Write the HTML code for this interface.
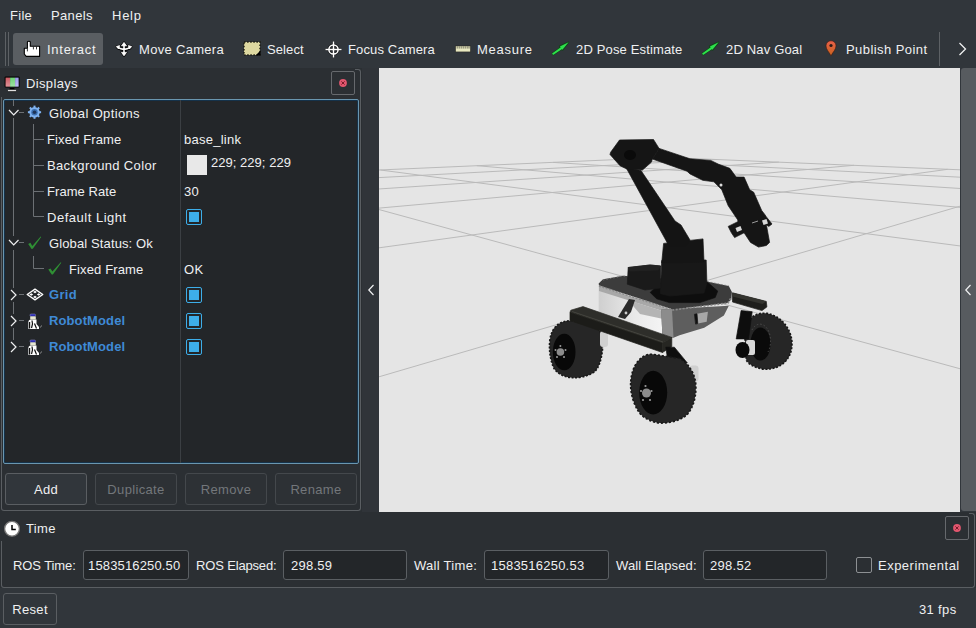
<!DOCTYPE html>
<html><head><meta charset="utf-8">
<style>
*{box-sizing:border-box;margin:0;padding:0}
html,body{width:976px;height:628px;overflow:hidden;background:#31363b;font-family:"Liberation Sans",sans-serif;font-size:13px;color:#eff0f1;letter-spacing:0.35px}
.a{position:absolute}
.t{position:absolute;white-space:nowrap;line-height:15px}
.lk{color:#3f8ad6;font-weight:bold}
.num{letter-spacing:0.1px}
.btn{border:1px solid #5a5e62;border-radius:3px;background:#31363b;text-align:center;line-height:31px}
.dis{color:#73777b;border-color:#44484c;background:#2d3135}
.inp{border:1px solid #5b5f63;border-radius:3px;background:#232629}
.cb{left:186px;width:16px;height:16px;border:1.5px solid #3daee9;border-radius:2px;background:#232629}
.cb::after{content:"";position:absolute;left:1.5px;top:1.5px;width:10px;height:10px;background:#3daee9}
</style></head><body>
<!-- menu -->
<span class="t" style="left:10px;top:8px;letter-spacing:0.28px">File</span>
<span class="t" style="left:51px;top:8px">Panels</span>
<span class="t" style="left:112px;top:8px;letter-spacing:0.75px">Help</span>
<!-- toolbar -->
<div class="a" style="left:5px;top:32px;width:1px;height:34px;background:#5d6165"></div>
<div class="a" style="left:8px;top:32px;width:1px;height:34px;background:#5d6165"></div>
<div class="a" style="left:13px;top:33px;width:90px;height:32px;background:#5a5e62;border-radius:3px"></div>
<svg class="a" style="left:22px;top:39px" width="20" height="20" viewBox="0 0 20 20">
 <path d="M4.2 17.4 L2.3 15 V9.2 H5.4 V3 Q5.4 2.2 6.85 2.2 Q8.3 2.2 8.3 3 V7.2 H17.6 V17.4 Z" fill="#fff" stroke="#000" stroke-width="1.1" stroke-linejoin="round"/>
 <path d="M5.4 9.2 V12.4 M11.4 7.4 V10.4 M14.5 7.4 V10.4" stroke="#222" stroke-width="0.9"/>
</svg>
<span class="t" style="left:47px;top:42px;letter-spacing:0.75px">Interact</span>
<svg class="a" style="left:114px;top:39px" width="20" height="20" viewBox="0 0 20 20">
 <g stroke="#000" stroke-width="3.4" fill="#000" stroke-linejoin="round" opacity="0.9">
  <path d="M10 4.5 V15.5 M3.5 8.2 Q10 12.6 16.5 8.2" fill="none"/>
  <path d="M10 3.4 L7.5 6.8 H12.5 Z M10 16.8 L7.5 13.4 H12.5 Z M2.3 7.6 L5.6 6.6 L4.6 10 Z M17.7 7.6 L14.4 6.6 L15.4 10 Z" stroke-width="2"/>
 </g>
 <path d="M10 4.5 V15.5 M3.5 8.2 Q10 12.6 16.5 8.2" stroke="#fff" stroke-width="1.6" fill="none"/>
 <path d="M10 3.4 L7.5 6.8 H12.5 Z M10 16.8 L7.5 13.4 H12.5 Z M2.3 7.6 L5.6 6.6 L4.6 10 Z M17.7 7.6 L14.4 6.6 L15.4 10 Z" fill="#fff" stroke="#fff" stroke-width="0.8" stroke-linejoin="round"/>
</svg>
<span class="t" style="left:139px;top:42px;letter-spacing:0.31px">Move Camera</span>
<svg class="a" style="left:243px;top:41px" width="18" height="15" viewBox="0 0 18 15">
 <rect x="1" y="1" width="16" height="13" fill="#ddd8a0"/>
 <rect x="1" y="1" width="16" height="13" fill="none" stroke="#1c1c10" stroke-width="1.4" stroke-dasharray="1.5 1.6"/>
 <path d="M17.5 9.5 V14.5 H12.5 Z" fill="#000"/>
</svg>
<span class="t" style="left:267px;top:42px;letter-spacing:0.11px">Select</span>
<svg class="a" style="left:324px;top:40px" width="19" height="19" viewBox="0 0 19 19">
 <g stroke="#000" stroke-width="3" fill="none" opacity="0.6"><circle cx="9.5" cy="9.5" r="4.6"/><path d="M9.5 1.5V17.5M1.5 9.5H17.5"/></g>
 <g stroke="#fff" stroke-width="1.5" fill="none"><circle cx="9.5" cy="9.5" r="4.6"/><path d="M9.5 1.5V17.5M1.5 9.5H17.5"/></g>
</svg>
<span class="t" style="left:348px;top:42px;letter-spacing:0.14px">Focus Camera</span>
<svg class="a" style="left:454px;top:44px" width="18" height="10" viewBox="0 0 18 10">
 <rect x="1.2" y="1.6" width="15.6" height="6.6" fill="#2a2a22" opacity="0.8"/>
 <rect x="1.8" y="2.2" width="14.4" height="5.4" fill="#e8e8c0"/>
 <path d="M3.2 2.2V4.6M5.2 2.2V4.6M7.2 2.2V4.6M9.2 2.2V4.6M11.2 2.2V4.6M13.2 2.2V4.6M15 2.2V4.6" stroke="#6a6a58" stroke-width="0.9"/>
</svg>
<span class="t" style="left:477px;top:42px;letter-spacing:0.73px">Measure</span>
<svg class="a" style="left:552px;top:41px" width="18" height="15" viewBox="0 0 18 15">
 <path d="M1.3 12.8 L9.1 7.4" stroke="#0b4a12" stroke-width="3.2" stroke-linecap="round" opacity="0.8"/>
 <path d="M16.6 1.2 L7.6 5.2 L10.6 9 Z" fill="#0b4a12" stroke="#0b4a12" stroke-width="1.4" stroke-linejoin="round" opacity="0.8"/>
 <path d="M1.3 12.8 L9.1 7.4" stroke="#2ee04c" stroke-width="2" stroke-linecap="round"/>
 <path d="M16.6 1.2 L7.9 5.4 L10.4 8.7 Z" fill="#2ee04c"/>
</svg>
<span class="t" style="left:576px;top:42px;letter-spacing:0.15px">2D Pose Estimate</span>
<svg class="a" style="left:702px;top:41px" width="18" height="15" viewBox="0 0 18 15">
 <path d="M1.3 12.8 L9.1 7.4" stroke="#0b4a12" stroke-width="3.2" stroke-linecap="round" opacity="0.8"/>
 <path d="M16.6 1.2 L7.6 5.2 L10.6 9 Z" fill="#0b4a12" stroke="#0b4a12" stroke-width="1.4" stroke-linejoin="round" opacity="0.8"/>
 <path d="M1.3 12.8 L9.1 7.4" stroke="#2ee04c" stroke-width="2" stroke-linecap="round"/>
 <path d="M16.6 1.2 L7.9 5.4 L10.4 8.7 Z" fill="#2ee04c"/>
</svg>
<span class="t" style="left:726px;top:42px;letter-spacing:0.17px">2D Nav Goal</span>
<svg class="a" style="left:824px;top:39px" width="14" height="18" viewBox="0 0 14 18">
 <defs><linearGradient id="pin" x1="0" y1="0" x2="0" y2="1"><stop offset="0" stop-color="#e8604a"/><stop offset="1" stop-color="#c8641e"/></linearGradient></defs>
 <path d="M7 16.8 C5 13 2 10.5 2 6.8 A5 5 0 0 1 12 6.8 C12 10.5 9 13 7 16.8 Z" fill="url(#pin)" stroke="#3a1a10" stroke-width="0.6"/>
 <circle cx="7" cy="6.5" r="1.6" fill="#2a1a18"/>
</svg>
<span class="t" style="left:846px;top:42px;letter-spacing:0.43px">Publish Point</span>
<div class="a" style="left:939px;top:32px;width:1px;height:34px;background:#5d6165"></div>
<svg class="a" style="left:956px;top:41px" width="12" height="16" viewBox="0 0 12 16">
 <path d="M3.5 2 L9.5 8 L3.5 14" stroke="#eff0f1" stroke-width="1.3" fill="none"/>
</svg>

<!-- left dock -->
<div class="a" style="left:0;top:68px;width:362px;height:444px;background:#2b2f33"></div>
<div class="a" style="left:1px;top:97px;width:360px;height:414px;border:1px solid #5a5e62;border-top:none;border-radius:0 0 3px 3px"></div>
<div class="a" style="left:355px;top:69px;width:6px;height:40px;border:1px solid #5a5e62;border-left:none;border-bottom:none;border-radius:0 3px 0 0"></div>
<svg class="a" style="left:3px;top:74px" width="18" height="19" viewBox="0 0 18 19">
 <defs><linearGradient id="scr" x1="0" y1="0" x2="0" y2="1"><stop offset="0" stop-color="#fff" stop-opacity="0"/><stop offset="1" stop-color="#fff" stop-opacity="0.35"/></linearGradient></defs>
 <rect x="1.6" y="2.6" width="15" height="11" fill="#000" rx="1"/>
 <rect x="2.6" y="3.6" width="4.5" height="9" fill="#cc5a62"/>
 <rect x="7.1" y="3.6" width="5" height="9" fill="#6cd274"/>
 <rect x="12.1" y="3.6" width="3.5" height="9" fill="#9c9aec"/>
 <rect x="2.6" y="3.6" width="13" height="9" fill="url(#scr)"/>
 <path d="M7 14 H11 L12 15.5 H6 Z" fill="#000"/>
 <rect x="4.5" y="15.6" width="9" height="2" rx="1" fill="#eee" stroke="#000" stroke-width="0.6"/>
</svg>
<span class="t" style="left:26px;top:76px">Displays</span>
<div class="a" style="left:331px;top:71px;width:24px;height:24px;border:1px solid #66696d;border-radius:2px"></div>
<svg class="a" style="left:337px;top:77px" width="12" height="12" viewBox="0 0 12 12">
 <circle cx="6" cy="6" r="3.9" fill="#e2566e"/><path d="M4.4 4.4L7.6 7.6M7.6 4.4L4.4 7.6" stroke="#7a1a2a" stroke-width="1"/>
</svg>

<!-- tree -->
<div class="a" style="left:3px;top:99px;width:356px;height:365px;background:#232629;border:1px solid #6a96af;border-radius:2px;box-shadow:inset 0 0 0 1px #15324a"></div>
<div class="a" style="left:180px;top:100px;width:1px;height:363px;background:#3b3f43"></div>
<svg class="a" style="left:4px;top:100px" width="176" height="363" viewBox="4 100 176 363">
 <g stroke="#6c7074" stroke-width="1" fill="none">
  <path d="M13.5 100 V106 M13.5 118 V236 M13.5 250 V288 M13.5 302 V314 M13.5 328 V340"/>
  <path d="M19 112.5 H24 M19 242.5 H24 M19 294.5 H24 M19 320.5 H24 M19 346.5 H24"/>
  <path d="M33.5 124 V216.5 H44 M33.5 139.5 H44 M33.5 165.5 H44 M33.5 191.5 H44"/>
  <path d="M33.5 256 V268.5 H44"/>
 </g>
 <g stroke="#eff0f1" stroke-width="1.2" fill="none">
  <path d="M9 110 L13.7 115 L18.5 110 M9 240 L13.7 245 L18.5 240"/>
  <path d="M11 290 L16 295 L11 300 M11 316 L16 321 L11 326 M11 342 L16 347 L11 352"/>
 </g>
 <!-- gear -->
 <g transform="translate(34.5 112.2)">
  <circle r="5.2" fill="#7fb2f0"/>
  <g fill="#7fb2f0"><rect x="-1" y="-6.6" width="2" height="13.2"/><rect x="-1" y="-6.6" width="2" height="13.2" transform="rotate(45)"/><rect x="-1" y="-6.6" width="2" height="13.2" transform="rotate(90)"/><rect x="-1" y="-6.6" width="2" height="13.2" transform="rotate(135)"/></g>
  <circle r="3.2" fill="#3b6fb0"/><circle r="1.8" fill="#1d3458"/>
 </g>
 <!-- checks -->
 <path transform="translate(28.2 236.5)" d="M0 7.4 L2.2 6.2 L4.1 9.4 L12.4 0 L13 0.6 L4.6 12.2 L3.4 12.4 Z" fill="#2f8f34"/>
 <path transform="translate(48.3 262.2)" d="M0 7.4 L2.2 6.2 L4.1 9.4 L12.4 0 L13 0.6 L4.6 12.2 L3.4 12.4 Z" fill="#2f8f34"/>
 <!-- grid icon -->
 <g transform="translate(35 294.5)">
  <path d="M0 -5.4 L7.8 0 L0 5.4 L-7.8 0 Z" fill="none" stroke="#fff" stroke-width="1.3" stroke-linejoin="round"/>
  <g fill="#fff"><path d="M0 -3.8 L1.9 -2.5 L0 -1.2 L-1.9 -2.5 Z"/><path d="M0 1.2 L1.9 2.5 L0 3.8 L-1.9 2.5 Z"/><path d="M-3.7 -1.3 L-1.8 0 L-3.7 1.3 L-5.6 0 Z"/><path d="M3.7 -1.3 L5.6 0 L3.7 1.3 L1.8 0 Z"/></g>
 </g>
 <!-- robot icons -->
 <g id="rbi" transform="translate(27 314)">
  <rect x="3" y="0" width="5.5" height="2.4" rx="1" fill="#2a2ab0" stroke="#9090d0" stroke-width="0.5"/>
  <rect x="3.2" y="2.4" width="5.6" height="3" fill="#e6e6cf"/>
  <path d="M1.4 15 V8 Q1.4 5.4 4 5.4 H9.5 V10 L12 13 V15 Z" fill="#fff"/>
  <path d="M2.6 8 V14.4 M5 6.5 L5.5 10 L4.5 14 M7.5 9.5 L9.5 14.5" stroke="#111" stroke-width="1.2" fill="none"/>
  <path d="M13.5 13.5 L14.5 11.5" stroke="#aaa" stroke-width="0.8"/>
 </g>
 <g transform="translate(27 340)">
  <rect x="3" y="0" width="5.5" height="2.4" rx="1" fill="#2a2ab0" stroke="#9090d0" stroke-width="0.5"/>
  <rect x="3.2" y="2.4" width="5.6" height="3" fill="#e6e6cf"/>
  <path d="M1.4 15 V8 Q1.4 5.4 4 5.4 H9.5 V10 L12 13 V15 Z" fill="#fff"/>
  <path d="M2.6 8 V14.4 M5 6.5 L5.5 10 L4.5 14 M7.5 9.5 L9.5 14.5" stroke="#111" stroke-width="1.2" fill="none"/>
  <path d="M13.5 13.5 L14.5 11.5" stroke="#aaa" stroke-width="0.8"/>
 </g>
</svg>
<span class="t" style="left:49px;top:106px">Global Options</span>
<span class="t" style="left:47px;top:132px;letter-spacing:0.13px">Fixed Frame</span>
<span class="t" style="left:47px;top:158px">Background Color</span>
<span class="t" style="left:47px;top:184px;letter-spacing:0.07px">Frame Rate</span>
<span class="t" style="left:47px;top:210px;letter-spacing:0.52px">Default Light</span>
<span class="t" style="left:49px;top:236px;letter-spacing:0.12px">Global Status: Ok</span>
<span class="t" style="left:69px;top:262px;letter-spacing:0.13px">Fixed Frame</span>
<span class="t lk" style="left:49px;top:287px">Grid</span>
<span class="t lk" style="left:49px;top:313px;letter-spacing:0.11px">RobotModel</span>
<span class="t lk" style="left:49px;top:339px;letter-spacing:0.11px">RobotModel</span>
<span class="t" style="left:184px;top:132px;letter-spacing:0.25px">base_link</span>
<div class="a" style="left:187px;top:155px;width:20px;height:20px;background:#e8e8e8"></div>
<span class="t" style="left:211px;top:155px;letter-spacing:0.03px">229; 229; 229</span>
<span class="t" style="left:184px;top:184px">30</span>
<span class="t" style="left:184px;top:262px">OK</span>
<div class="cb a" style="top:209px"></div>
<div class="cb a" style="top:287px"></div>
<div class="cb a" style="top:313px"></div>
<div class="cb a" style="top:339px"></div>
<!-- buttons -->
<div class="btn a" style="left:5px;top:473px;width:82px;height:32px">Add</div>
<div class="btn dis a" style="left:95px;top:473px;width:82px;height:32px">Duplicate</div>
<div class="btn dis a" style="left:185px;top:473px;width:82px;height:32px">Remove</div>
<div class="btn dis a" style="left:275px;top:473px;width:82px;height:32px">Rename</div>
<!-- splitter arrows -->
<div class="a" style="left:362px;top:68px;width:17px;height:444px;background:#303439"></div>
<svg class="a" style="left:366px;top:283px" width="10" height="14" viewBox="0 0 10 14"><path d="M7.5 2 L2.8 7 L7.5 12" stroke="#eff0f1" stroke-width="1.2" fill="none"/></svg>

<svg class="a" style="left:379px;top:68px" width="581" height="444" viewBox="379 68 581 444">
<rect x="379" y="68" width="581" height="444" fill="#e5e5e5"/>
<path d="M377.0 377.4L962.0 205.6M962.0 369.3L377.0 209.0M377.0 248.1L947.7 169.3M962.0 246.2L380.4 170.0M377.0 208.3L853.9 165.3M962.0 207.5L476.8 165.7M377.0 189.1L778.8 162.1M962.0 188.6L553.0 162.4M377.0 177.7L717.3 159.5M962.0 177.3L614.9 159.6M377.0 170.1L666.0 157.4M962.0 169.9L666.0 157.4" stroke="#bababa" stroke-width="1" fill="none"/>
<g id="robot">
<!-- rear right wheel -->
<path d="M744.6 332.5 C746 318 756 312 767 313.4 C782 316 792 330 792 343.7 C792 360 780 370 763.7 369.2 C754 368 747 363 746.2 359.6 Z" fill="#262626"/>
<path d="M744.6 332.5 C746 318 756 312 767 313.4 C782 316 792 330 792 343.7 C792 360 780 370 763.7 369.2 C754 368 747 363 746.2 359.6 Z" fill="none" stroke="#181818" stroke-width="1.6" stroke-dasharray="2 1.6"/>
<ellipse cx="760.5" cy="344" rx="10" ry="16.5" fill="#0a0a0a"/>
<path d="M752 330 A10 16 0 0 1 768 352" stroke="#555" stroke-width="0.8" fill="none" stroke-dasharray="1.5 2"/>
<polygon points="741.1,310.6 752.2,311.8 748.5,338.9 736.2,338.9" fill="#0e0e0e" stroke="#0e0e0e" stroke-width="0.7"/>
<rect x="746" y="340" width="9" height="15" rx="2" fill="#d8d8d8"/>
<ellipse cx="742.5" cy="350" rx="7" ry="8" fill="#0a0a0a"/>
<!-- right bar -->
<polygon points="732.5,292.8 766.3,301.4 766.9,306.9 762,310.6 732.5,302" fill="#1f1f1c" stroke="#1f1f1c" stroke-width="0.7"/>
<polygon points="732.5,292.8 766.3,301.4 762.5,304 732.5,296.5" fill="#34342f"/>
<!-- chassis faces -->
<defs>
 <linearGradient id="silv" x1="0" y1="0" x2="1" y2="0"><stop offset="0" stop-color="#cfcfcf"/><stop offset="0.55" stop-color="#e9e9e9"/><stop offset="1" stop-color="#f4f4f4"/></linearGradient>
</defs>
<polygon points="598.7,283.6 627,293 662.5,309.4 662.5,337 645,330 620,321 598.7,312" fill="url(#silv)"/>
<polygon points="599,286 673,310 672,314 599,291" fill="#a8a8a8"/>
<polygon points="628,300 672,314 668,320 640,314" fill="#b4b4b4"/>
<polygon points="661.2,309.4 728.8,305.7 723.9,315.5 704.2,327.8 679.6,335.2 673.5,337.7 662.4,336.4" fill="#5e5e5e"/>
<polygon points="661.2,309.4 672,309 673.5,337.7 662.4,336.4" fill="#8c8c8c"/>
<polygon points="694.4,314.3 707.9,311.8 706.7,321.7 695.6,324.1" fill="#a8a8a8"/>
<polygon points="694.4,314.3 697,313.8 697.8,323.6 695.6,324.1" fill="#111" stroke="#111" stroke-width="0.7"/>
<!-- top plate -->
<polygon points="598.7,283.6 603,279.3 623,275.8 707.9,281.7 728.8,286 731.9,292.1 731.3,299.5 727.6,303 673,309.5 599,285.5" fill="#3c3c3c"/>
<polyline points="599,286 673,310 728,303 731.5,297" fill="none" stroke="#8a8a8a" stroke-width="1.6" stroke-dasharray="2 1.5"/>
<polyline points="603,280 623,276 707.9,281.7 728.8,286" fill="none" stroke="#777" stroke-width="0.8" stroke-dasharray="1.5 2"/>
<!-- turret -->
<polygon points="650.2,292.4 656.6,298.8 669.3,302.6 699.9,302.6 715.2,297.5 717.7,291.1 707.5,282.2 660,283" fill="#0e0e0e" stroke="#0e0e0e" stroke-width="0.7"/>
<polygon points="661.7,260.6 706.2,260 706.9,283 704,293 670,296 660.4,293.7" fill="#181818" stroke="#181818" stroke-width="0.7"/>
<polygon points="628.2,267.5 650,265 660.7,266 660.7,288 645,290 627.3,284.2" fill="#1a1a1a" stroke="#1a1a1a" stroke-width="0.7"/>
<polygon points="628.2,267.5 650,265 660.7,266 658,270 630,271" fill="#222" stroke="#222" stroke-width="0.7"/>
<polygon points="663.6,243.4 703,238.9 704,262 661.7,263" fill="#151515" stroke="#151515" stroke-width="0.7"/>
<!-- upper arm -->
<polygon points="626,167.5 641,170.5 675,221 681,225 690,240 686,246 669,246" fill="#141414" stroke="#141414" stroke-width="0.7"/>
<!-- elbow block -->
<polygon points="619.5,140 653.5,139.5 659.1,148.4 652.4,159 651.3,162.3 642.4,170.1 626.8,169 620,165.7 610,154.5 610.6,152.3" fill="#151515" stroke="#151515" stroke-width="0.7"/>
<ellipse cx="630" cy="155" rx="6" ry="5" fill="#0a0a0a"/>
<!-- forearm -->
<polygon points="659.1,148.4 690,158.8 710.7,160.4 718.7,164.3 729.8,168.3 736.2,177.1 744.1,177.1 749.7,189.8 753.7,192.2 761.7,210.5 764.8,214.5 766.4,216.9 772,224 768.8,226.4 766.4,224.8 769.6,242.4 766.4,245.5 758.5,247.1 750.5,242.4 744.1,232.8 734.6,237.6 731.4,232.8 728.2,226.4 737.8,221.7 737.8,220 728.2,205.7 721.8,189.8 713.9,181.8 702.7,180.3 690,173.9 687,171.2 652.4,159" fill="#151515" stroke="#151515" stroke-width="0.7"/>
<circle cx="721" cy="185" r="1.5" fill="#ddd"/>
<polygon points="735.5,228 740.5,226 742,230 737,232" fill="#d8d8d8"/><polygon points="762,220.5 766.5,219 768,223.5 763.5,225" fill="#d8d8d8"/><path d="M752 223 L758 221" stroke="#999" stroke-width="1"/>
<!-- front left wheel -->
<path d="M549.7 341.2 C551 327 560 320 572.3 320.8 L598 327.3 C602 334 603 343 602.4 350.9 C601 362 598 369 593.8 372.4 C586 377 578 378 572.3 377.8 C562 377 555 372 552.9 366 C550 358 549 350 549.7 341.2 Z" fill="#262626"/>
<path d="M549.7 341.2 C551 327 560 320 572.3 320.8 L598 327.3 C602 334 603 343 602.4 350.9 C601 362 598 369 593.8 372.4 C586 377 578 378 572.3 377.8 C562 377 555 372 552.9 366 C550 358 549 350 549.7 341.2 Z" fill="none" stroke="#181818" stroke-width="1.6" stroke-dasharray="2 1.6"/>
<ellipse cx="564.2" cy="352" rx="11.3" ry="18.3" fill="#080808"/>
<circle cx="560.4" cy="352" r="3.8" fill="#8c8c8c"/>
<g fill="#9a9a9a"><circle cx="560.4" cy="346" r="1"/><circle cx="565.5" cy="350" r="1"/><circle cx="564" cy="357" r="1"/><circle cx="557" cy="357" r="1"/><circle cx="555.5" cy="350" r="1"/></g>
<rect x="600" y="331" width="8" height="16" rx="3" fill="#d0d0d0"/>
<!-- front bar -->
<polygon points="583,306.6 671.8,337.4 662.5,343.1 570,312.3 570.8,310.2" fill="#2e2e2a" stroke="#2e2e2a" stroke-width="0.7"/>
<polygon points="570,312.3 662.5,343.1 662.5,352.5 570,320.5" fill="#1c1c19" stroke="#1c1c19" stroke-width="0.7"/>
<polygon points="662.5,343.1 671.8,337.4 671.8,346.5 662.5,352.5" fill="#262622" stroke="#262622" stroke-width="0.7"/>
<line x1="572" y1="311.5" x2="663" y2="342" stroke="#4a4a44" stroke-width="0.8"/>
<path d="M629 299 L635 300 L631 312 L625 319 L618 317 Z" fill="#2a2a2a"/><circle cx="626" cy="313" r="1.4" fill="#ccc"/>
<!-- front right wheel -->
<polygon points="665.8,347.2 674.4,347.2 687.3,362.9 676,366 668,362" fill="#0e0e0e" stroke="#0e0e0e" stroke-width="0.7"/>
<rect x="689.5" y="365.5" width="9" height="16" rx="3" fill="#d0d0d0"/>
<path d="M630.7 381.5 C632 364 642 353 653 354.3 L680.2 358.6 C690 365 696 375 695.9 387.3 C696 400 692 409 687.3 414.5 C680 421 670 423 660.1 423.1 C650 422 642 417 638.6 411.6 C633 403 630 392 630.7 381.5 Z" fill="#262626"/>
<path d="M630.7 381.5 C632 364 642 353 653 354.3 L680.2 358.6 C690 365 696 375 695.9 387.3 C696 400 692 409 687.3 414.5 C680 421 670 423 660.1 423.1 C650 422 642 417 638.6 411.6 C633 403 630 392 630.7 381.5 Z" fill="none" stroke="#181818" stroke-width="1.6" stroke-dasharray="2.2 1.8"/>
<ellipse cx="653.2" cy="392.6" rx="14" ry="21.8" fill="#080808"/>
<circle cx="646.5" cy="393" r="4.5" fill="#8c8c8c"/>
<g fill="#9a9a9a"><circle cx="645.5" cy="386" r="1.1"/><circle cx="651.5" cy="391" r="1.1"/><circle cx="650" cy="400" r="1.1"/><circle cx="643" cy="400" r="1.1"/><circle cx="641" cy="391" r="1.1"/></g>
</g>

</svg>
<div class="a" style="left:961px;top:68px;width:15px;height:443px;background:#575b5f;border-radius:3px 0 0 3px"></div>
<svg class="a" style="left:963px;top:283px" width="10" height="14" viewBox="0 0 10 14"><path d="M7.5 2 L2.8 7 L7.5 12" stroke="#eff0f1" stroke-width="1.2" fill="none"/></svg>
<!-- time panel -->
<div class="a" style="left:0;top:512px;width:976px;height:76px;background:#2b2f33"></div>
<div class="a" style="left:1px;top:541px;width:974px;height:47px;border:1px solid #5a5e62;border-top:none;border-radius:0 0 3px 3px"></div>
<div class="a" style="left:969px;top:513px;width:6px;height:40px;border:1px solid #5a5e62;border-left:none;border-bottom:none;border-radius:0 3px 0 0"></div>
<svg class="a" style="left:3px;top:520px" width="18" height="18" viewBox="0 0 18 18">
 <circle cx="9" cy="8.8" r="7.4" fill="#fff" stroke="#777" stroke-width="1.3"/>
 <path d="M9 5 V9.6 H12.8" stroke="#000" stroke-width="1.5" fill="none"/>
</svg>
<span class="t" style="left:26px;top:521px">Time</span>
<div class="a" style="left:945px;top:516px;width:24px;height:24px;border:1px solid #66696d;border-radius:2px"></div>
<svg class="a" style="left:951px;top:522px" width="12" height="12" viewBox="0 0 12 12">
 <circle cx="6" cy="6" r="3.9" fill="#e2566e"/><path d="M4.4 4.4L7.6 7.6M7.6 4.4L4.4 7.6" stroke="#7a1a2a" stroke-width="1"/>
</svg>
<span class="t" style="left:13px;top:558px;letter-spacing:-0.09px">ROS Time:</span>
<div class="inp a" style="left:83px;top:550px;width:106px;height:30px"></div>
<span class="t num" style="left:88px;top:558px;letter-spacing:0.15px">1583516250.50</span>
<span class="t" style="left:196px;top:558px;letter-spacing:-0.16px">ROS Elapsed:</span>
<div class="inp a" style="left:283px;top:550px;width:124px;height:30px"></div>
<span class="t num" style="left:291px;top:558px;letter-spacing:0.24px">298.59</span>
<span class="t" style="left:414px;top:558px;letter-spacing:0.29px">Wall Time:</span>
<div class="inp a" style="left:484px;top:550px;width:125px;height:30px"></div>
<span class="t num" style="left:491px;top:558px;letter-spacing:0.23px">1583516250.53</span>
<span class="t" style="left:616px;top:558px;letter-spacing:0.13px">Wall Elapsed:</span>
<div class="inp a" style="left:703px;top:550px;width:124px;height:30px"></div>
<span class="t num" style="left:710px;top:558px;letter-spacing:0.3px">298.52</span>
<div class="a" style="left:856px;top:557px;width:16px;height:16px;border:1px solid #8d9093;border-radius:2px"></div>
<span class="t" style="left:878px;top:558px;letter-spacing:0.49px">Experimental</span>
<!-- status -->
<div class="btn a" style="left:3px;top:593px;width:54px;height:32px">Reset</div>
<span class="t" style="left:919px;top:602px">31 fps</span>

</body></html>
